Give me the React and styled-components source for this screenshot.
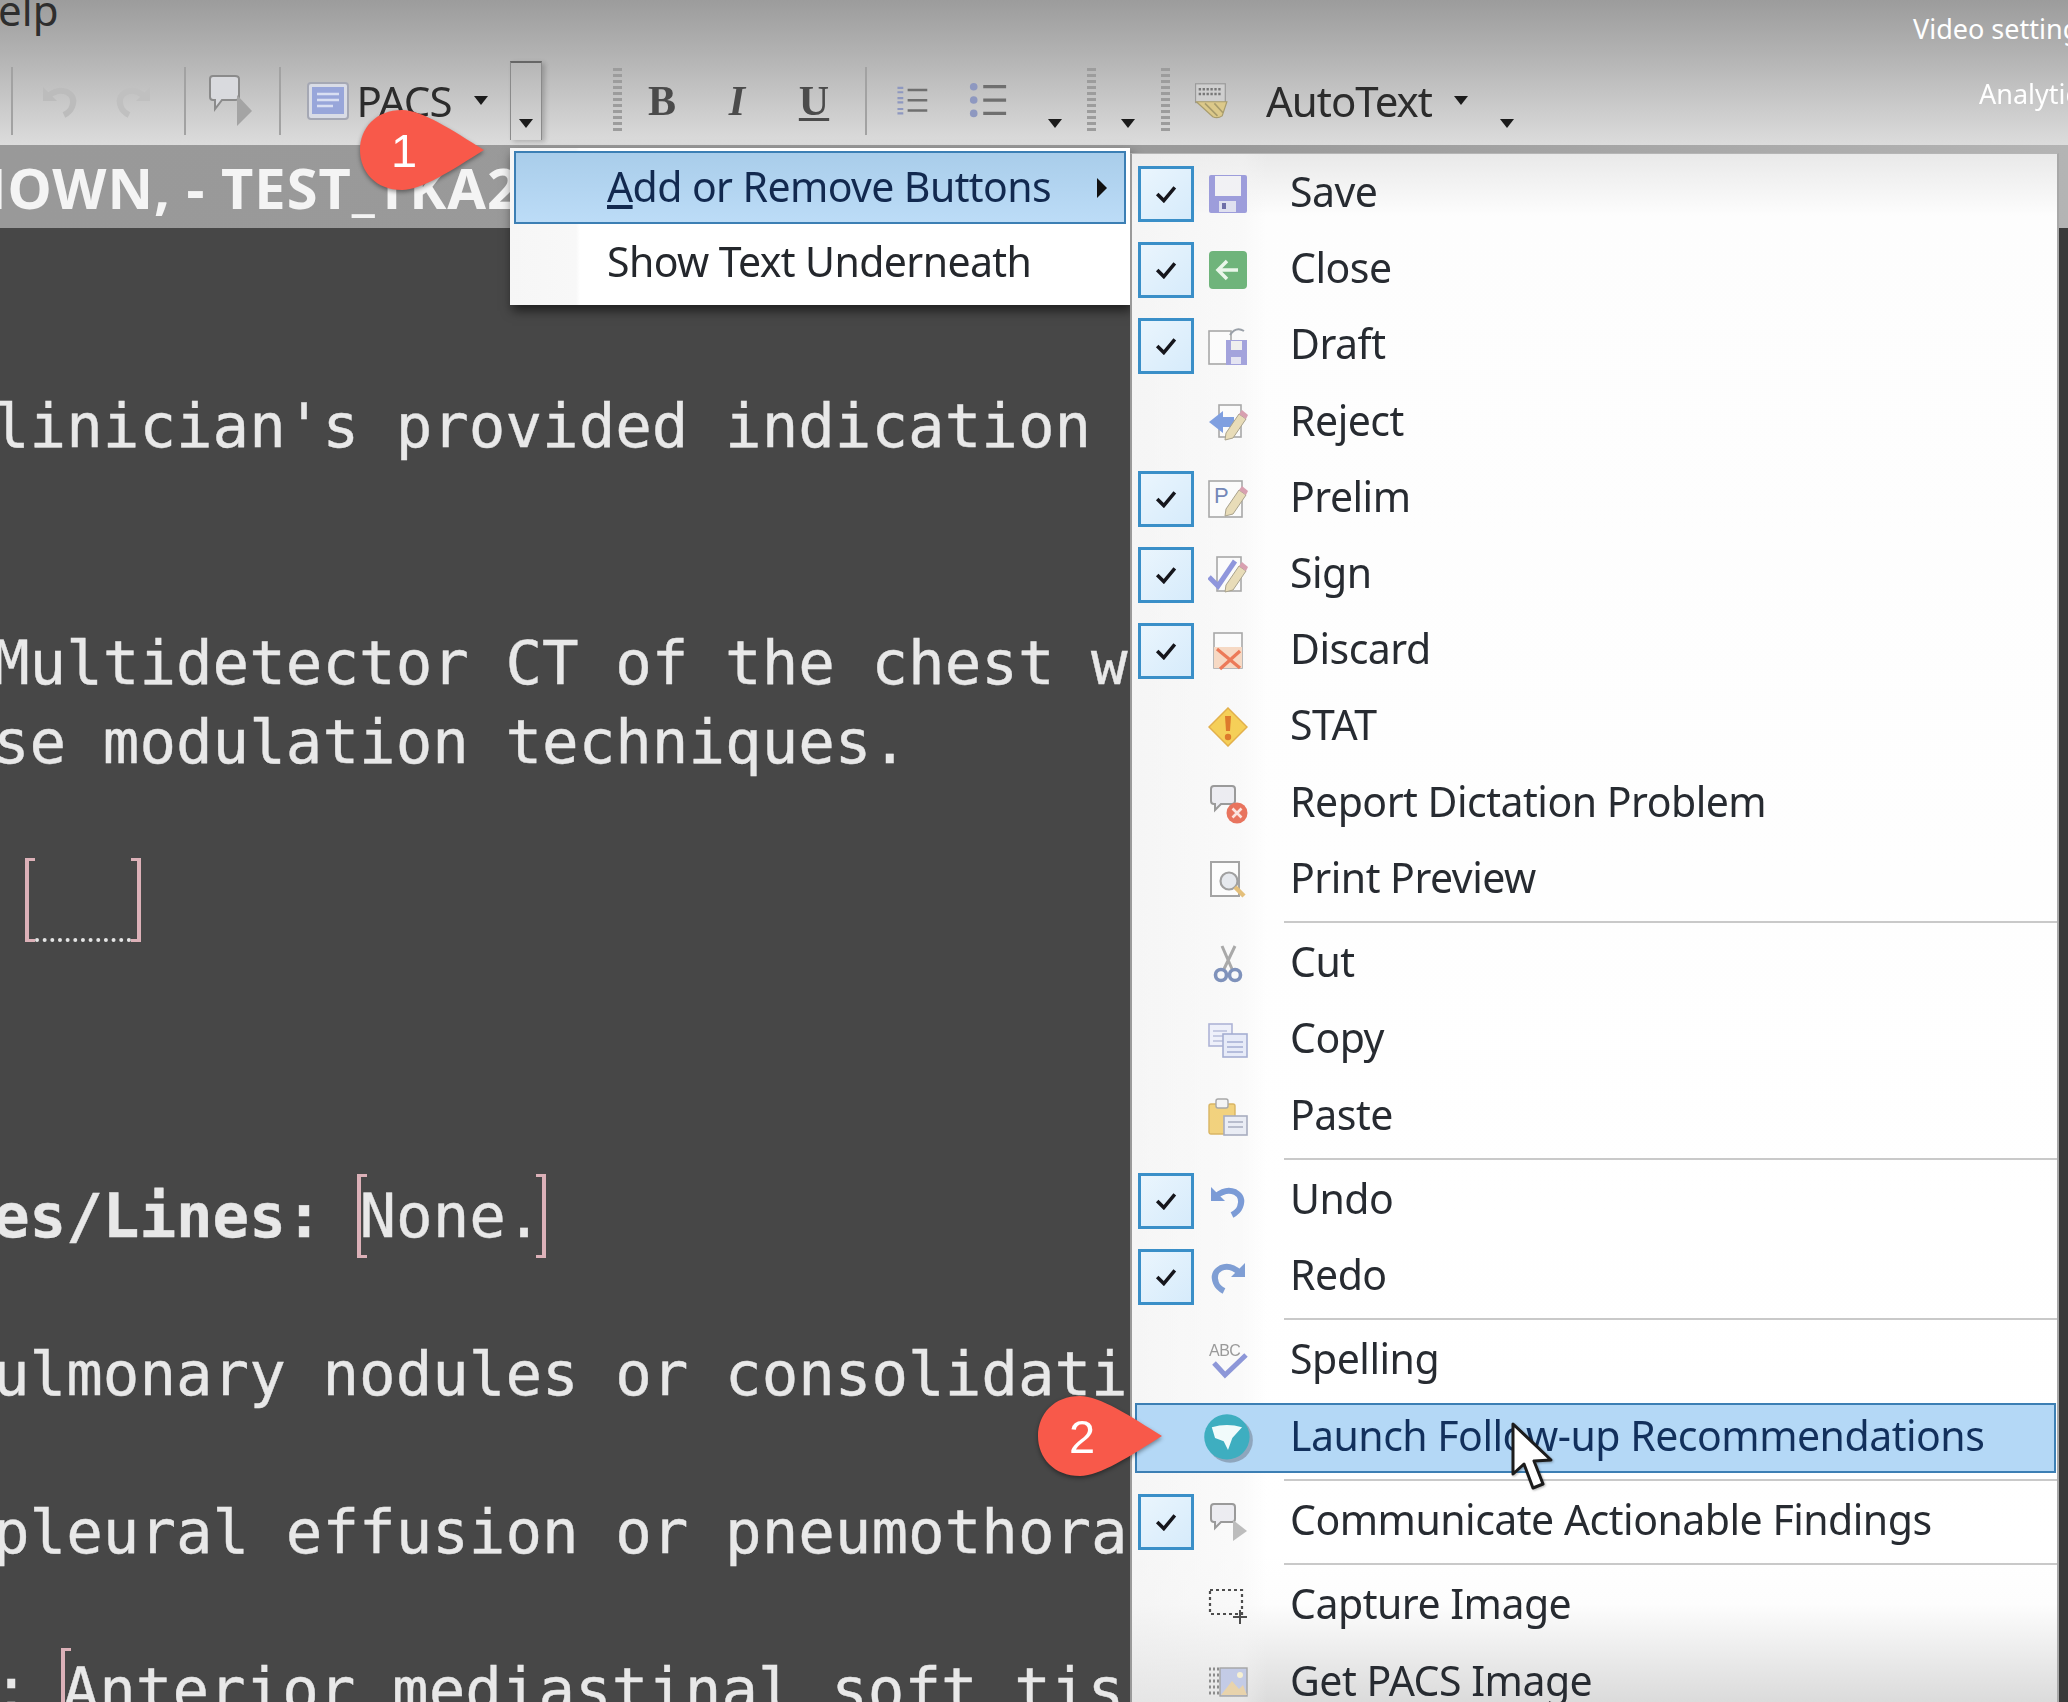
import React from 'react';
import styled, { createGlobalStyle } from 'styled-components';

const GlobalStyle = createGlobalStyle`
  html, body {
    margin: 0;
    padding: 0;
    background: #474747;
    overflow: hidden;
  }
`;

const Screen = styled.div`
  position: relative;
  display: flex;
  flex-direction: column;
  width: 2068px;
  height: 1702px;
  overflow: hidden;
  font-family: 'Noto Sans', sans-serif;
  filter: blur(0.7px);
`;

const Toolbar = styled.div`
  display: flex;
  flex-direction: column;
  height: 145px;
  flex-shrink: 0;
  background: linear-gradient(180deg, #9c9c9c 0%, #b4b4b4 40%, #dcdcdc 100%);
`;

const MenuRow = styled.div`
  height: 61px;
  overflow: hidden;
`;

const MenuLabel = styled.div`
  margin: -16px 0 0 -33px;
  font-size: 42px;
  line-height: 52px;
  color: #2e2e2e;
`;

const ToolRow = styled.div`
  display: flex;
  height: 79px;
`;

const Slot = styled.div`
  display: flex;
  justify-content: center;
  align-items: ${p => (p.$low ? 'flex-end' : 'center')};
  flex-shrink: 0;
  width: ${p => p.$w}px;
  margin-left: ${p => p.$ml || 0}px;
  padding-bottom: ${p => (p.$low ? '12px' : '0')};
  box-sizing: border-box;
`;

const Sep = styled.div`
  width: 2px;
  height: 68px;
  background: #a2a2a2;
`;

const Grip = styled.div`
  width: 9px;
  height: 66px;
  background: repeating-linear-gradient(180deg, #9c9c9c 0 3px, transparent 3px 6px);
`;

const Caret = styled.span`
  display: block;
  width: 0;
  height: 0;
  border-left: 7px solid transparent;
  border-right: 7px solid transparent;
  border-top: 9px solid #1b1b1b;
`;

const ToolText = styled.span`
  font-size: 42px;
  letter-spacing: -1px;
  color: #2c2c2c;
  white-space: nowrap;
`;

const FormatGlyph = styled.span`
  font-family: 'Liberation Serif', serif;
  font-size: 42px;
  line-height: 40px;
  font-weight: 700;
  font-style: ${p => (p.$italic ? 'italic' : 'normal')};
  text-decoration: ${p => (p.$under ? 'underline' : 'none')};
  text-decoration-thickness: 3px;
  text-underline-offset: 3px;
  color: #4b4b4b;
`;

const OverflowButton = styled.div`
  display: flex;
  justify-content: center;
  align-items: flex-end;
  flex-shrink: 0;
  box-sizing: border-box;
  width: 32px;
  padding-bottom: 12px;
  border: 1.5px solid #8a8a8a;
  border-top: 2px solid #666;
  border-bottom: none;
  box-shadow: 3px 2px 5px rgba(0, 0, 0, 0.2);
`;

const Band = styled.div`
  display: flex;
  align-items: center;
  height: 83px;
  flex-shrink: 0;
  overflow: hidden;
  background: linear-gradient(90deg, #999 0%, #9a9a9a 60%, #b4b4b4 100%);
`;

const BandTitle = styled.div`
  margin-left: -167px;
  font-size: 56px;
  font-weight: 700;
  letter-spacing: 1px;
  color: #f4f4f4;
  white-space: pre;
`;

const Editor = styled.div`
  flex: 1;
  padding-top: 158px;
  overflow: hidden;
  background: #474747;
  font-family: 'DejaVu Sans Mono', monospace;
  font-size: 60.8px;
  color: #e8e8e8;
  -webkit-text-stroke: 0.4px #e8e8e8;
`;

const Line = styled.div`
  display: flex;
  align-items: center;
  height: 79px;
  margin-left: -7px;
  white-space: pre;
`;

const Strong = styled.span`
  font-weight: 700;
`;

const Bracket = styled.span`
  display: block;
  flex-shrink: 0;
  box-sizing: border-box;
  width: 10px;
  height: 84px;
  margin: ${p => p.$m || '0'};
  border: solid #dcb1b8;
  border-width: ${p => (p.$right ? '3px 4px 3px 0' : '3px 0 3px 4px')};
`;

const BlankField = styled.span`
  flex: none;
  box-sizing: border-box;
  width: 96px;
  height: 84px;
  border-bottom: 4px dotted #e4e4e4;
`;

const Sliver = styled.div`
  position: absolute;
  top: 228px;
  right: 0;
  bottom: 0;
  width: 9px;
  background: #3a3a3a;
`;

const VideoLabel = styled.div`
  position: absolute;
  left: ${p => p.$x}px;
  top: ${p => p.$y}px;
  font-size: 27px;
  line-height: 36px;
  color: #fff;
  white-space: pre;
`;

const SubMenu = styled.div`
  position: absolute;
  left: 510px;
  top: 148px;
  width: 620px;
  height: 157px;
  box-sizing: border-box;
  padding: 3px 4px;
  background: linear-gradient(90deg, #f6f6f6 0, #f8f8f8 66px, #fff 70px);
  box-shadow: 2px 6px 10px rgba(0, 0, 0, 0.55);
`;

const SubRow = styled.div`
  display: flex;
  align-items: center;
  height: ${p => p.$h}px;
  box-sizing: border-box;
  padding: 0 0 4px 91px;
  font-size: 41px;
  letter-spacing: -0.6px;
  color: ${p => (p.$active ? '#12294f' : '#24272c')};
  border: ${p => (p.$active ? '2px solid #3c7fb4' : '2px solid transparent')};
  background: ${p => (p.$active ? 'linear-gradient(180deg, #a9cdea, #bcdcf7)' : 'none')};
  white-space: pre;
`;

const SubArrow = styled.span`
  display: block;
  margin: 4px 0 0 46px;
  border-top: 10px solid transparent;
  border-bottom: 10px solid transparent;
  border-left: 10px solid #111;
`;

const MainMenu = styled.div`
  position: absolute;
  left: 1130px;
  top: 153px;
  bottom: 0;
  width: 929px;
  box-sizing: border-box;
  padding-top: 2px;
  border-left: 2px solid #9a9a9a;
  border-right: 2px solid #a8a8a8;
  border-top: 1px solid #b5b5b5;
  overflow: hidden;
  background:
    linear-gradient(90deg, rgba(238, 238, 238, 0.55) 0, rgba(244, 244, 244, 0.45) 110px, rgba(255, 255, 255, 0) 135px),
    linear-gradient(180deg, #e9e9e9 0, #fdfdfd 62px, #fff 1400px, #fdfdfd 1450px, #dbdbdb 100%);
`;

const MenuItem = styled.div`
  position: relative;
  display: grid;
  grid-template-columns: 56px 40px 1fr;
  column-gap: 14px;
  align-items: center;
  height: 76.2px;
  padding-left: 6px;
  font-size: 41px;
  letter-spacing: -0.5px;
  color: ${p => (p.$active ? '#12305c' : '#272b31')};
  white-space: pre;

  ${p =>
    p.$active &&
    `
    &::before {
      content: '';
      position: absolute;
      inset: 3px 1px 3px 3px;
      border: 2px solid #3c7fb4;
      background: #b4d8f6;
    }
  `}

  & > * {
    position: relative;
  }
`;

const ItemLabel = styled.span`
  padding: 0 0 6px 28px;
`;

const CheckBox = styled.span`
  display: flex;
  justify-content: center;
  align-items: center;
  box-sizing: border-box;
  width: 56px;
  height: 56px;
  border: 3px solid #3a8fc8;
  background: linear-gradient(135deg, #eaf5fd, #d6ebfb);
`;

const Divider = styled.div`
  display: flex;
  align-items: center;
  height: 8.2px;
  margin-left: 152px;

  &::after {
    content: '';
    flex: 1;
    height: 2px;
    background: #c9c9c9;
  }
`;

const WideIcon = styled.span`
  display: block;
  margin-left: -7px;
`;

const Callout = styled.div`
  position: absolute;
  left: ${p => p.$x}px;
  top: ${p => p.$y}px;
  display: flex;
  align-items: center;
  width: 124px;
  height: 80px;
  filter: drop-shadow(0 2px 2px rgba(0, 0, 0, 0.4));
`;

const CalloutShape = styled.svg`
  position: absolute;
  inset: 0;
`;

const CalloutNumber = styled.span`
  position: relative;
  width: 88px;
  font-family: 'Liberation Sans', sans-serif;
  font-size: 47px;
  line-height: 1;
  text-align: center;
  color: #fff;
`;

const Pointer = styled.svg`
  position: absolute;
  left: 1511px;
  top: 1422px;
  filter: drop-shadow(1px 1px 1px rgba(0, 0, 0, 0.3));
`;

const Ico = ({ children, w = 40, h = 40, box = '0 0 40 40' }) => (
  <svg width={w} height={h} viewBox={box} style={{ display: 'block' }}>
    {children}
  </svg>
);

const Pencil = () => (
  <g>
    <path d="M18 30 L31 11 L38 16 L25 35 L17 37Z" fill="#e8dcb8" stroke="#a9a28c" strokeWidth="1" />
    <path d="M31 11 L34 7 L40 12 L38 16Z" fill="#d8a0b0" />
  </g>
);

const Page = ({ x = 6, y = 3, w = 26, h = 34 }) => (
  <rect x={x} y={y} width={w} height={h} fill="#fbfbfb" stroke="#a8a8a8" strokeWidth="1.6" />
);

const Bubble = () => (
  <path d="M3 5 Q3 2 6 2 H24 Q27 2 27 5 V17 Q27 20 24 20 H13 L7 26 V20 H6 Q3 20 3 17Z" fill="#ececf1" stroke="#9a9a9a" strokeWidth="2" />
);

const SaveIcon = () => (
  <Ico>
    <rect x="1" y="1" width="38" height="38" rx="2" fill="#9d9ddb" />
    <rect x="7" y="2" width="26" height="20" fill="#f1f1f4" />
    <rect x="11" y="27" width="17" height="11" fill="#dfe0ef" />
    <rect x="14" y="29" width="4" height="6" fill="#6f6fa8" />
  </Ico>
);

const CloseIcon = () => (
  <Ico>
    <rect x="1" y="1" width="38" height="38" rx="4" fill="#6fb47b" />
    <path d="M30 20 H11 M19 11 L10 20 L19 29" fill="none" stroke="#eaf6ea" strokeWidth="3.5" />
  </Ico>
);

const DraftIcon = () => (
  <Ico>
    <Page x="1" y="5" w="22" h="33" />
    <rect x="18" y="14" width="21" height="25" fill="#a3a3dc" />
    <rect x="23" y="15" width="11" height="9" fill="#eee" />
    <rect x="23" y="31" width="10" height="7" fill="#e4e4f2" />
    <path d="M22 9 Q28 0 36 5" fill="none" stroke="#9aa0a8" strokeWidth="2" />
  </Ico>
);

const RejectIcon = () => (
  <Ico>
    <Page x="11" y="2" w="22" h="32" />
    <path d="M1 19 L15 8 V14 H26 V24 H15 V30Z" fill="#7f9fe0" />
    <Pencil />
  </Ico>
);

const PrelimIcon = () => (
  <Ico>
    <Page x="1" y="2" w="33" h="36" />
    <text x="6" y="24" fontSize="22" fontFamily="'Liberation Sans', sans-serif" fill="#7488b8">P</text>
    <Pencil />
  </Ico>
);

const SignIcon = () => (
  <Ico>
    <Page x="9" y="2" w="24" h="34" />
    <path d="M1 22 L10 31 L27 6" fill="none" stroke="#8f96dc" strokeWidth="5" />
    <Pencil />
  </Ico>
);

const DiscardIcon = () => (
  <Ico>
    <Page x="6" y="2" w="28" h="35" />
    <path d="M6 16 H34 V37 H6Z" fill="#f6d9c4" />
    <path d="M9 18 L32 37 M32 20 L12 38" stroke="#ec7a58" strokeWidth="3.2" fill="none" />
  </Ico>
);

const StatIcon = () => (
  <Ico>
    <path d="M20 1 L39 20 L20 39 L1 20Z" fill="#f5cf58" stroke="#e2b04c" strokeWidth="1.5" />
    <path d="M17 9 H23 L22 24 H18Z" fill="#dd7a2c" />
    <circle cx="20" cy="30" r="3.2" fill="#dd7a2c" />
  </Ico>
);

const ReportIcon = () => (
  <Ico>
    <Bubble />
    <circle cx="29" cy="29" r="10.5" fill="#e8745e" />
    <path d="M24.5 24.5 L33.5 33.5 M33.5 24.5 L24.5 33.5" stroke="#fbe3de" strokeWidth="2.6" />
  </Ico>
);

const PreviewIcon = () => (
  <Ico>
    <rect x="3" y="2" width="28" height="34" fill="#fcfcfc" stroke="#a4a4a4" strokeWidth="2" />
    <circle cx="21" cy="21" r="8.5" fill="#e6e9ee" stroke="#a0a0a0" strokeWidth="2.2" />
    <path d="M27 27 L36 36" stroke="#e4bf7a" strokeWidth="4.5" />
  </Ico>
);

const CutIcon = () => (
  <Ico>
    <path d="M14 2 L24 25 M27 2 L16 25" stroke="#a9a9a9" strokeWidth="3" fill="none" />
    <circle cx="13" cy="31" r="5.5" fill="none" stroke="#7f92bb" strokeWidth="3.6" />
    <circle cx="27" cy="31" r="5.5" fill="none" stroke="#7f92bb" strokeWidth="3.6" />
  </Ico>
);

const CopyIcon = () => (
  <Ico>
    <rect x="1" y="4" width="23" height="22" fill="#eef0fa" stroke="#aeb4d6" strokeWidth="1.6" />
    <path d="M5 11 H19 M5 16 H19 M5 21 H15" stroke="#b9bfdb" strokeWidth="1.6" />
    <rect x="15" y="14" width="24" height="23" fill="#e7ebf8" stroke="#a5aed2" strokeWidth="1.6" />
    <path d="M19 22 H35 M19 27 H35 M19 32 H35" stroke="#a5aed2" strokeWidth="1.6" />
  </Ico>
);

const PasteIcon = () => (
  <Ico>
    <rect x="1" y="7" width="26" height="30" rx="2" fill="#f2d27e" stroke="#d9b564" strokeWidth="1.4" />
    <rect x="8" y="2" width="12" height="9" rx="2" fill="#f4f4f4" stroke="#a8a8a8" strokeWidth="1.4" />
    <rect x="16" y="19" width="23" height="19" fill="#eaedf5" stroke="#a8adc0" strokeWidth="1.6" />
    <path d="M20 25 H35 M20 30 H35" stroke="#a8adc0" strokeWidth="1.6" />
  </Ico>
);

const UndoIcon = ({ tone = '#7b9bd6' }) => (
  <Ico>
    <path d="M8 15 Q18 7 27 11 Q36 16 32 26 Q30 31 24 34" fill="none" stroke={tone} strokeWidth="6" />
    <path d="M3 6 V20 H17Z" fill={tone} />
  </Ico>
);

const RedoIcon = ({ tone = '#7f9ed4' }) => (
  <Ico>
    <path d="M32 16 Q22 7 13 11 Q4 16 8 26 Q10 31 16 34" fill="none" stroke={tone} strokeWidth="6" />
    <path d="M37 6 V20 H23Z" fill={tone} />
  </Ico>
);

const SpellIcon = () => (
  <Ico>
    <text x="1" y="15" fontSize="16" fontFamily="'Liberation Sans', sans-serif" fill="#9a9a9a">ABC</text>
    <path d="M6 22 L17 34 L38 14" fill="none" stroke="#8d97d8" strokeWidth="5" />
  </Ico>
);

const LaunchIcon = () => (
  <WideIcon>
    <Ico w={54} h={54} box="0 0 50 50">
      <circle cx="27" cy="27" r="21" fill="#8fa6bd" />
      <circle cx="24" cy="24" r="21" fill="#3eaec0" />
      <path d="M10 15 Q24 11 38 15 L29 25 L25 36 L21 28 L13 25Z" fill="#f1fbfb" />
    </Ico>
  </WideIcon>
);

const CommunicateIcon = () => (
  <Ico>
    <Bubble />
    <path d="M25 18 L39 29 L25 39Z" fill="#bdbdbd" />
  </Ico>
);

const CaptureIcon = () => (
  <Ico>
    <rect x="2" y="4" width="32" height="24" fill="none" stroke="#4d4d4d" strokeWidth="2.2" strokeDasharray="3 3" />
    <path d="M32 24 V38 M25 31 H39" stroke="#4d4d4d" strokeWidth="2" />
  </Ico>
);

const PacsImageIcon = () => (
  <Ico>
    <path d="M1 6 H13 M1 12 H13 M1 18 H13 M1 24 H13 M1 30 H13" stroke="#8d8d8d" strokeWidth="3" strokeDasharray="2 2" />
    <rect x="12" y="5" width="27" height="28" fill="#c3cbe6" stroke="#a4a4a4" strokeWidth="1.4" />
    <path d="M13 32 L24 18 L31 26 L35 22 L39 32Z" fill="#e8d3ac" />
    <circle cx="32" cy="12" r="3" fill="#f6f0d2" />
  </Ico>
);

const Tick = () => (
  <svg width="22" height="18" viewBox="0 0 20 16">
    <path d="M2 8 L8 14 L18 2" fill="none" stroke="#16161c" strokeWidth="3.2" />
  </svg>
);

const PacsGlyph = () => (
  <Ico w={42} h={38} box="0 0 42 38">
    <rect x="1" y="1" width="40" height="36" rx="3" fill="#d9dce6" stroke="#a5a8b4" strokeWidth="2" />
    <rect x="5" y="5" width="32" height="27" fill="#98a6da" />
    <path d="M10 12 H32 M10 18 H32 M10 24 H26" stroke="#d9dff2" strokeWidth="2.4" />
  </Ico>
);

const SpeechGlyph = () => (
  <Ico w={46} h={56} box="0 0 46 56">
    <path d="M3 6 Q3 3 6 3 H28 Q32 3 32 6 V24 Q32 27 28 27 H15 L8 36 V27 H6 Q3 27 3 24Z" fill="#d9dade" stroke="#8b8b8b" strokeWidth="2" />
    <path d="M30 22 L45 38 L30 53Z" fill="#a4a4a4" />
  </Ico>
);

const NumberedGlyph = () => (
  <Ico w={42} h={40} box="0 0 44 42">
    <path d="M2 3 H10 M2 9 H10 M2 17 H10 M2 23 H10 M2 32 H10 M2 38 H10" stroke="#8e98c0" strokeWidth="3" />
    <path d="M16 6 H43 M16 20 H43 M16 34 H43" stroke="#6f6f6f" strokeWidth="3.4" />
  </Ico>
);

const BulletGlyph = () => (
  <Ico w={40} h={40} box="0 0 40 42">
    <circle cx="5" cy="6" r="4" fill="#8e98c0" />
    <circle cx="5" cy="20" r="4" fill="#8e98c0" />
    <circle cx="5" cy="34" r="4" fill="#8e98c0" />
    <path d="M15 6 H39 M15 20 H39 M15 34 H39" stroke="#6f6f6f" strokeWidth="3.4" />
  </Ico>
);

const AutoTextGlyph = () => (
  <Ico w={46} h={46} box="0 0 46 46">
    <rect x="2" y="1" width="38" height="24" fill="#cfcfcf" stroke="#9a9a9a" strokeWidth="1.5" />
    <path d="M6 8 H36 M6 14 H36" stroke="#777" strokeWidth="3" strokeDasharray="3 2" />
    <path d="M3 24 L24 43 Q30 46 36 42 L42 24Z" fill="#dcc98a" stroke="#a89c6c" strokeWidth="1.5" />
    <path d="M14 26 L30 42 M26 26 L37 38" stroke="#a89c6c" strokeWidth="2" />
  </Ico>
);

const MENU = [
  { label: 'Save', Icon: SaveIcon, on: true },
  { label: 'Close', Icon: CloseIcon, on: true },
  { label: 'Draft', Icon: DraftIcon, on: true },
  { label: 'Reject', Icon: RejectIcon },
  { label: 'Prelim', Icon: PrelimIcon, on: true },
  { label: 'Sign', Icon: SignIcon, on: true },
  { label: 'Discard', Icon: DiscardIcon, on: true },
  { label: 'STAT', Icon: StatIcon },
  { label: 'Report Dictation Problem', Icon: ReportIcon },
  { label: 'Print Preview', Icon: PreviewIcon },
  'divider',
  { label: 'Cut', Icon: CutIcon },
  { label: 'Copy', Icon: CopyIcon },
  { label: 'Paste', Icon: PasteIcon },
  'divider',
  { label: 'Undo', Icon: UndoIcon, on: true },
  { label: 'Redo', Icon: RedoIcon, on: true },
  'divider',
  { label: 'Spelling', Icon: SpellIcon },
  { label: 'Launch Follow-up Recommendations', Icon: LaunchIcon, active: true },
  'divider',
  { label: 'Communicate Actionable Findings', Icon: CommunicateIcon, on: true },
  'divider',
  { label: 'Capture Image', Icon: CaptureIcon },
  { label: 'Get PACS Image', Icon: PacsImageIcon },
];

const CalloutBubble = ({ x, y, n }) => (
  <Callout $x={x} $y={y}>
    <CalloutShape width="124" height="80" viewBox="0 0 124 80">
      <path d="M42 0 C62 0 92 20 124 40 C92 60 62 80 42 80 C16 80 0 62 0 40 C0 18 16 0 42 0Z" fill="#f8594a" />
    </CalloutShape>
    <CalloutNumber>{n}</CalloutNumber>
  </Callout>
);

export default function App() {
  return (
    <Screen>
      <GlobalStyle />
      <Toolbar>
        <MenuRow>
          <MenuLabel>Help</MenuLabel>
        </MenuRow>
        <ToolRow>
          <Slot $w={24}><Sep /></Slot>
          <Slot $w={72}><UndoIcon tone="#bcbcbc" /></Slot>
          <Slot $w={74}><RedoIcon tone="#c0c0c0" /></Slot>
          <Slot $w={30}><Sep /></Slot>
          <Slot $w={60}><SpeechGlyph /></Slot>
          <Slot $w={40}><Sep /></Slot>
          <Slot $w={56}><PacsGlyph /></Slot>
          <Slot $w={96}><ToolText>PACS</ToolText></Slot>
          <Slot $w={58}><Caret /></Slot>
          <OverflowButton><Caret /></OverflowButton>
          <Slot $w={50} $ml={50}><Grip /></Slot>
          <Slot $w={40}><FormatGlyph>B</FormatGlyph></Slot>
          <Slot $w={110}><FormatGlyph $italic>I</FormatGlyph></Slot>
          <Slot $w={44}><FormatGlyph $under>U</FormatGlyph></Slot>
          <Slot $w={60}><Sep /></Slot>
          <Slot $w={32}><NumberedGlyph /></Slot>
          <Slot $w={120}><BulletGlyph /></Slot>
          <Slot $w={14} $low><Caret /></Slot>
          <Slot $w={58}><Grip /></Slot>
          <Slot $w={16} $low><Caret /></Slot>
          <Slot $w={58}><Grip /></Slot>
          <Slot $w={36}><AutoTextGlyph /></Slot>
          <Slot $w={200} $ml={19}><ToolText>AutoText</ToolText></Slot>
          <Slot $w={24}><Caret /></Slot>
          <Slot $w={68} $low><Caret /></Slot>
        </ToolRow>
      </Toolbar>

      <Band>
        <BandTitle>UNKNOWN, - TEST_TKA2</BandTitle>
      </Band>

      <Editor>
        <Line>linician's provided indication</Line>
        <Line> </Line>
        <Line> </Line>
        <Line>Multidetector CT of the chest w</Line>
        <Line>se modulation techniques.</Line>
        <Line> </Line>
        <Line>
          <Bracket $m="0 0 0 32px" />
          <BlankField />
          <Bracket $right />
        </Line>
        <Line> </Line>
        <Line> </Line>
        <Line> </Line>
        <Line>
          <Strong>es/Lines:</Strong>
          <Bracket $m="0 -8px 0 35px" />
          None.
          <Bracket $right $m="0 0 0 -6px" />
        </Line>
        <Line> </Line>
        <Line>ulmonary nodules or consolidati</Line>
        <Line> </Line>
        <Line>pleural effusion or pneumothora</Line>
        <Line> </Line>
        <Line>
          :
          <Bracket $m="0 -8px 0 31px" />
          Anterior mediastinal soft tis
        </Line>
      </Editor>

      <Sliver />
      <VideoLabel $x={1913} $y={11}>Video settings</VideoLabel>
      <VideoLabel $x={1979} $y={76}>Analytics</VideoLabel>

      <SubMenu>
        <SubRow $h={73} $active>
          <span><u>A</u>dd or Remove Buttons</span>
          <SubArrow />
        </SubRow>
        <SubRow $h={78}>Show Text Underneath</SubRow>
      </SubMenu>

      <MainMenu>
        {MENU.map((item, i) =>
          item === 'divider' ? (
            <Divider key={i} />
          ) : (
            <MenuItem key={item.label} $active={item.active}>
              {item.on ? <CheckBox><Tick /></CheckBox> : <span />}
              <item.Icon />
              <ItemLabel>{item.label}</ItemLabel>
            </MenuItem>
          )
        )}
      </MainMenu>

      <CalloutBubble x={360} y={110} n="1" />
      <CalloutBubble x={1038} y={1396} n="2" />

      <Pointer width="42" height="70" viewBox="0 0 42 70">
        <path d="M2 2 V52 L13 42 L22 66 L32 62 L23 39 L40 38Z" fill="#fff" stroke="#1c1c1c" strokeWidth="3" strokeLinejoin="round" />
      </Pointer>
    </Screen>
  );
}
